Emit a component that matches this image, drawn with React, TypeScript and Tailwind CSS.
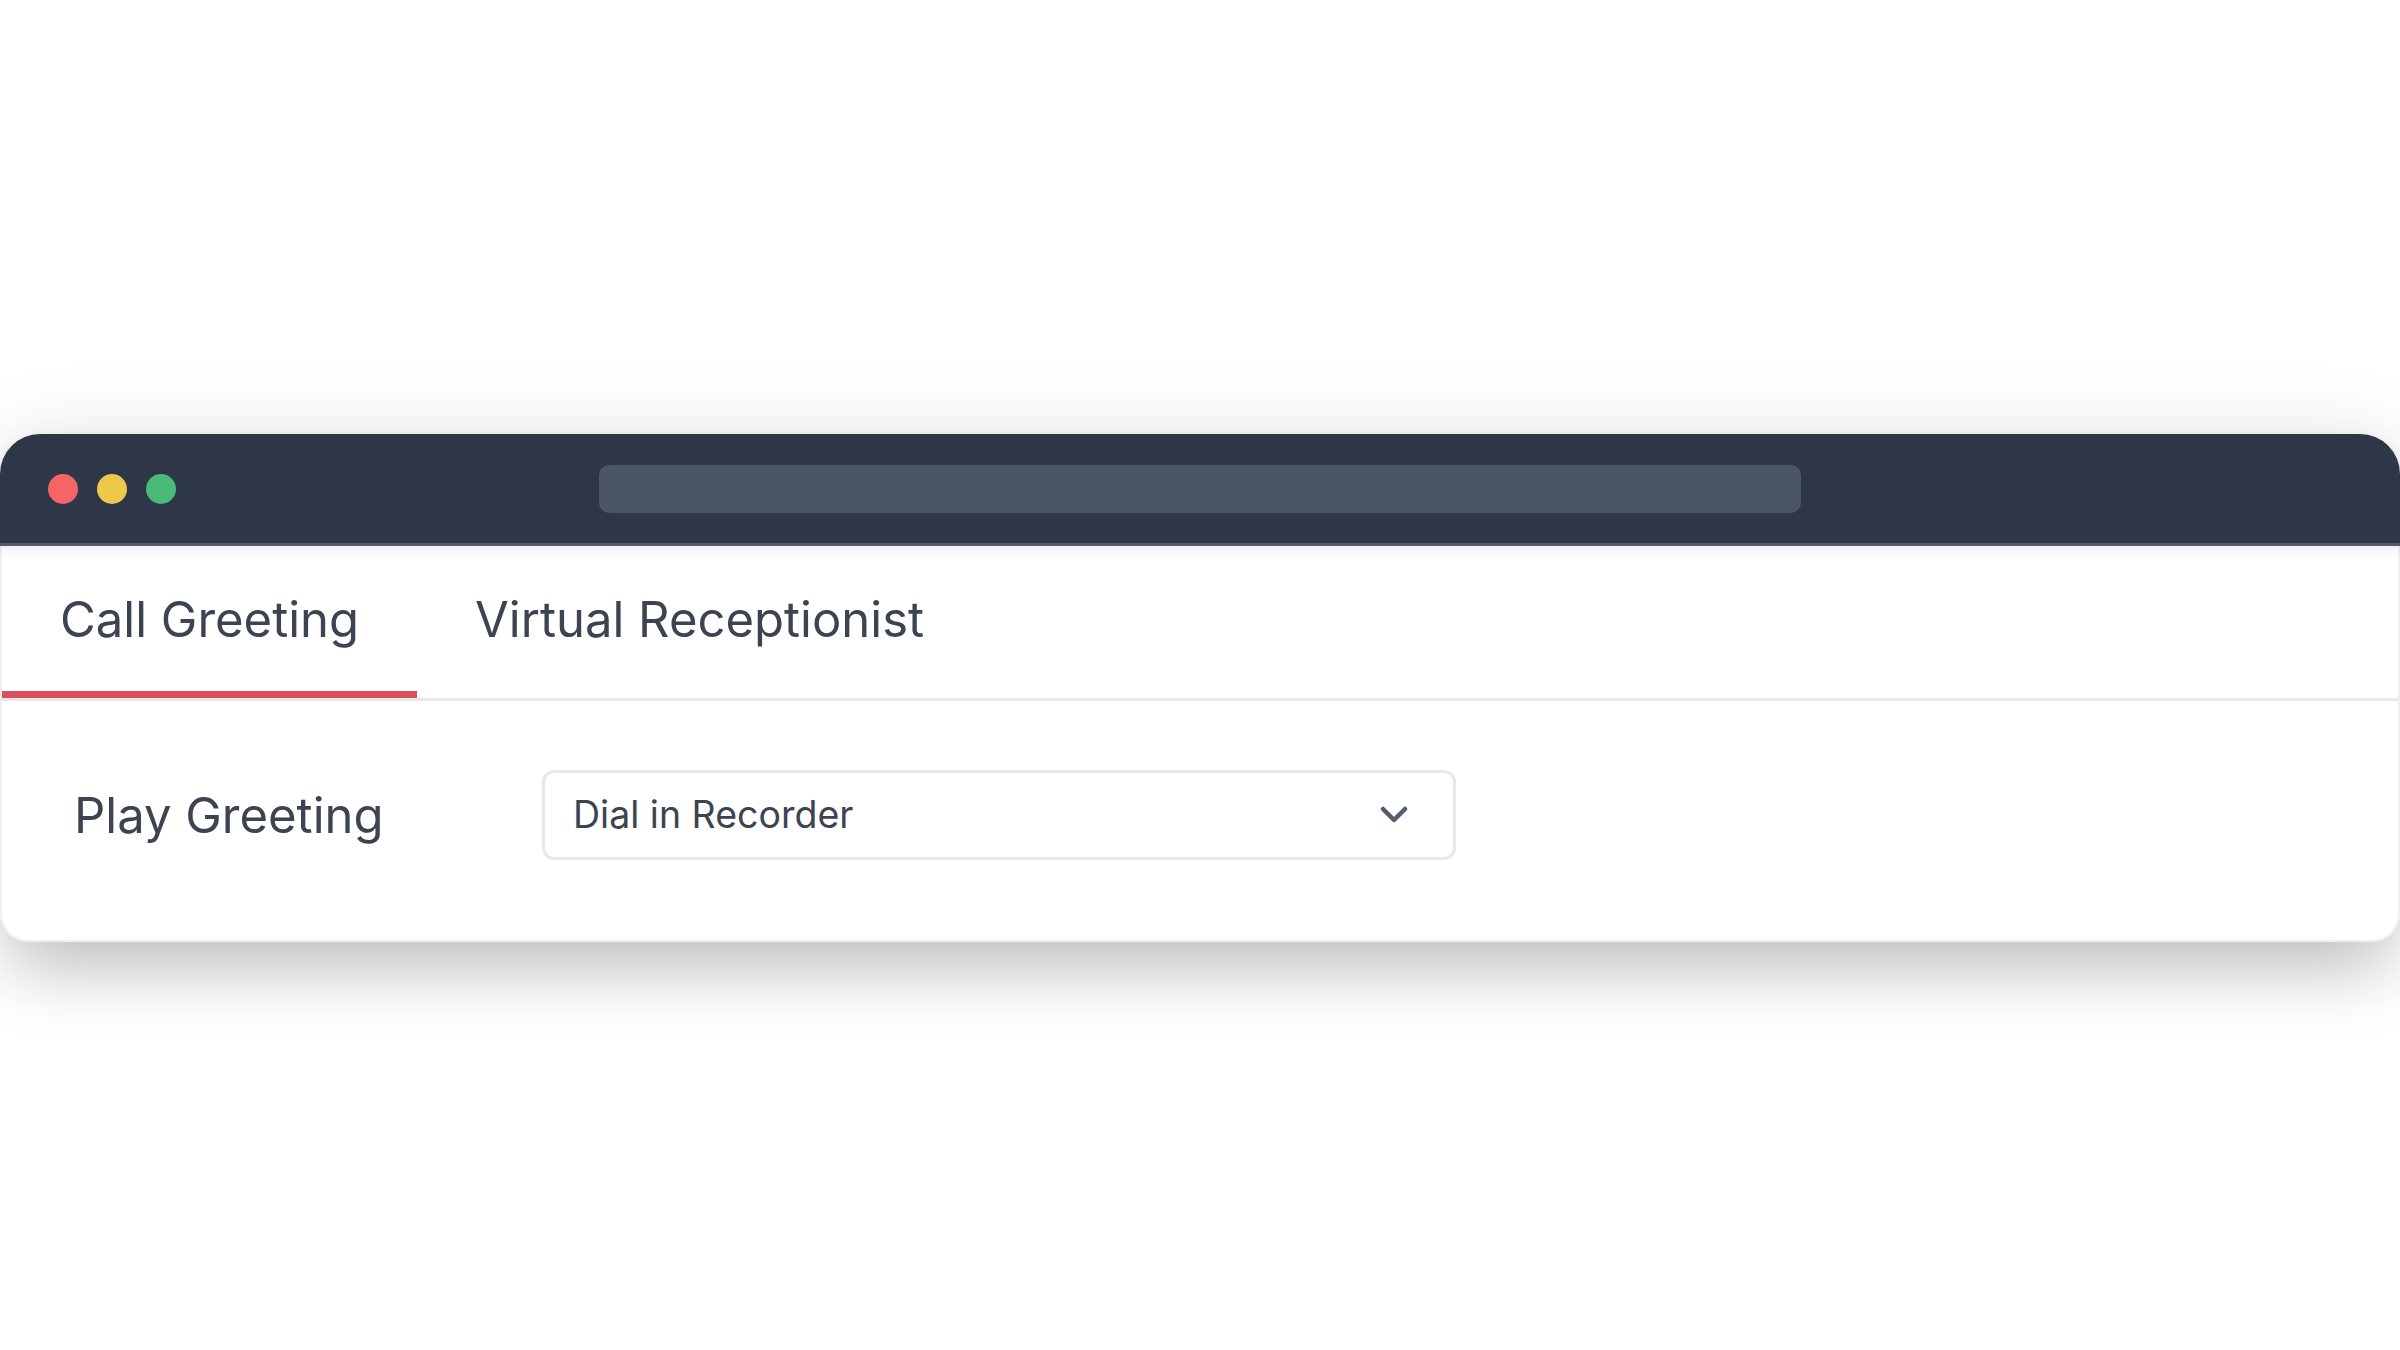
const tabs = ["Call Greeting", "Virtual Receptionist"];

export default function App() {
  const active = 0;

  return (
    <div className="min-h-screen bg-white pt-[434px] font-['Inter','Liberation_Sans',sans-serif] text-[#3d4451]">
      <div className="rounded-t-[40px] rounded-b-[28px] bg-white shadow-[0_40px_70px_-10px_rgba(0,0,0,0.2),0_0_80px_rgba(0,0,0,0.1)]">
        {/* title bar */}
        <div className="relative z-10 grid h-[112px] grid-cols-[1fr_1202px_1fr] items-center rounded-t-[40px] border-b-[3px] border-[#535b69] bg-[#2d3748] shadow-[0_4px_12px_rgba(0,0,0,0.08)]">
          <div className="flex items-center gap-[19px] pl-[48px]">
            <span className="h-[30px] w-[30px] rounded-full bg-[#f56565]" />
            <span className="h-[30px] w-[30px] rounded-full bg-[#ecc94b]" />
            <span className="h-[30px] w-[30px] rounded-full bg-[#48bb78]" />
          </div>
          <div className="h-[48px] rounded-[10px] bg-[#4a5568]" />
          <div />
        </div>

        {/* content */}
        <div className="rounded-b-[28px] border-x-2 border-b-2 border-[#eceef0] bg-white">
          <div className="flex border-b-[3px] border-[#e8e9eb]">
            {tabs.map((t, i) => (
              <div
                key={t}
                className={
                  i === active
                    ? "flex h-[152px] items-center border-b-[7px] border-[#de4f5c] px-[58px] pt-[2px] text-[49px] leading-none"
                    : "flex h-[152px] items-center border-b-[7px] border-transparent px-[58px] pt-[2px] text-[49px] leading-none"
                }
              >
                {t}
              </div>
            ))}
          </div>

          <div className="flex items-center px-[72px] pt-[69px] pb-[80px]">
            <div className="w-[468px] text-[49px] leading-none">Play Greeting</div>
            <div className="flex h-[90px] w-[914px] items-center justify-between rounded-[12px] border-[3px] border-[#e6e8eb] pl-[28px] pr-[45px]">
              <span className="text-[37.5px] leading-none">Dial in Recorder</span>
              <svg width="28" height="18" viewBox="0 0 28 18" fill="none" className="text-[#555d6b]">
                <polyline points="3,3 14,14 25,3" stroke="currentColor" strokeWidth="4.5" strokeLinecap="round" strokeLinejoin="round" />
              </svg>
            </div>
          </div>
        </div>
      </div>
    </div>
  );
}
